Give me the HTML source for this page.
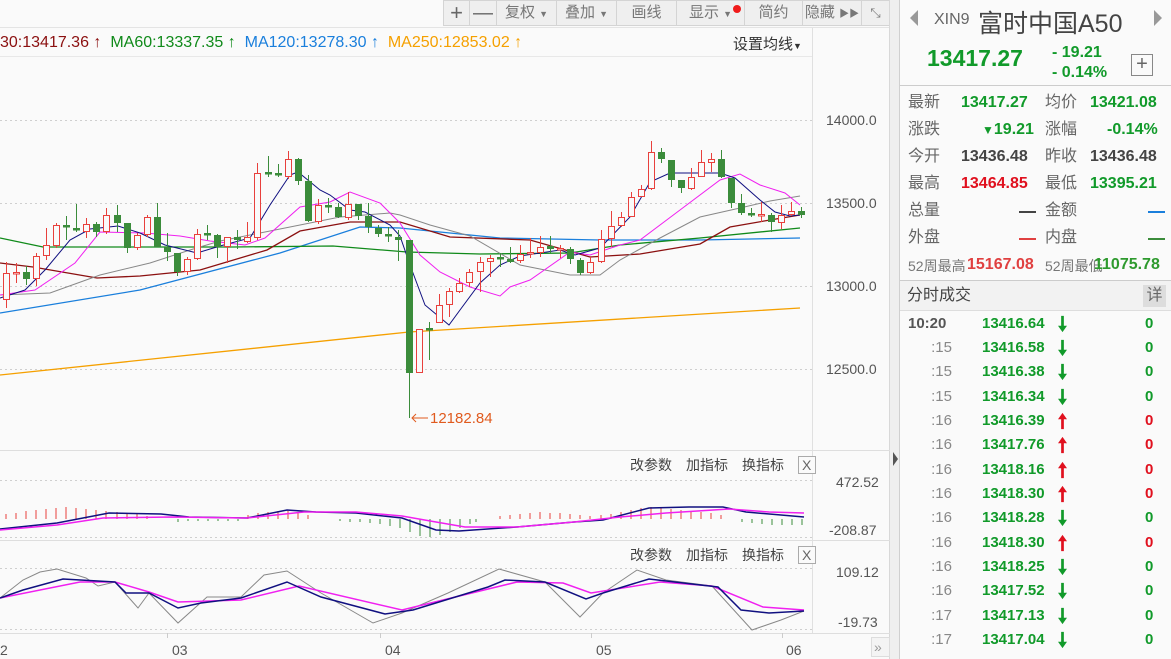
<!DOCTYPE html>
<html><head><meta charset="utf-8">
<style>
*{margin:0;padding:0;box-sizing:border-box}
body{width:1171px;height:659px;overflow:hidden;background:#fafafa;font-family:"Liberation Sans","Noto Sans CJK SC",sans-serif;position:relative}
.abs{position:absolute}
.tb{position:absolute;top:0;height:26px;background:#efefef;border:1px solid #d4d4d4;border-left:none;color:#777;font-size:15px;line-height:24px;text-align:center}
.lab{color:#666;font-size:16px}
.st{position:absolute;font-size:16px;white-space:nowrap;line-height:20px;height:20px}
.b{font-weight:bold}
.g{color:#119a2a}.r{color:#e0101e}.k{color:#444}
.row{position:absolute;left:900px;width:271px;height:24px;font-size:15px;line-height:20px}
.row .t{position:absolute;left:8px;width:44px;text-align:right;color:#888}
.row .p{position:absolute;left:82px;font-weight:bold;color:#119a2a}
.row svg{position:absolute;left:158px;top:1px}
.row .v{position:absolute;left:245px;font-weight:bold}
</style></head><body>
<svg width="0" height="0" style="position:absolute"><defs>
<symbol id="dn" viewBox="0 0 10 18"><path d="M3.5 0h3v11h3.5l-5 7-5-7h3.5z" fill="#119a2a"/></symbol>
<symbol id="up" viewBox="0 0 10 18"><path d="M3.5 18h3v-11h3.5l-5-7-5 7h3.5z" fill="#e0101e"/></symbol>
</defs></svg>
<!-- toolbar -->
<div class="tb" style="left:443px;width:27px;border-left:1px solid #d4d4d4;font-size:22px;color:#666">+</div>
<div class="tb" style="left:470px;width:27px;font-size:20px;color:#666">—</div>
<div class="tb" style="left:497px;width:60px">复权 <span style="font-size:9px">▼</span></div>
<div class="tb" style="left:557px;width:60px">叠加 <span style="font-size:9px">▼</span></div>
<div class="tb" style="left:617px;width:60px">画线</div>
<div class="tb" style="left:677px;width:68px">显示 <span style="font-size:9px">▼</span><span style="position:absolute;left:56px;top:4px;width:8px;height:8px;border-radius:4px;background:#f01c1c"></span></div>
<div class="tb" style="left:745px;width:58px">简约</div>
<div class="tb" style="left:803px;width:59px">隐藏 <span style="font-size:10px">▶▶</span></div>
<div class="tb" style="left:862px;width:28px;font-size:13px">⤡</div>
<div class="abs" style="left:0;top:27px;width:890px;height:1px;background:#e4e4e4"></div>
<div class="abs" style="left:0;top:32px;font-size:16px;white-space:nowrap;line-height:22px">
<span style="color:#8b1010">30:13417.36 ↑</span>&nbsp; <span style="color:#108a1a">MA60:13337.35 ↑</span>&nbsp; <span style="color:#1a7fdc">MA120:13278.30 ↑</span>&nbsp; <span style="color:#f5a000">MA250:12853.02 ↑</span></div>
<div class="abs" style="left:733px;top:33px;font-size:15px;color:#333">设置均线<span style="font-size:9px">▼</span></div>
<div class="abs" style="left:0;top:56px;width:812px;height:1px;background:#e8e8e8"></div>
<div class="abs" style="left:812px;top:28px;width:1px;height:605px;background:#e0e0e0"></div>
<div class="abs" style="left:889px;top:0;width:1px;height:659px;background:#d8d8d8"></div>
<div class="abs" style="left:890px;top:0;width:10px;height:659px;background:#efefef;border-right:1px solid #d0d0d0"></div>
<div class="abs" style="left:893px;top:452px;width:0;height:0;border-top:7px solid transparent;border-bottom:7px solid transparent;border-left:5px solid #555"></div>

<svg class="abs" style="left:0;top:0" width="890" height="659">
<g stroke="#cfcfcf" stroke-dasharray="2,3">
<line x1="0" y1="120.5" x2="812" y2="120.5"/><line x1="0" y1="203.5" x2="812" y2="203.5"/><line x1="0" y1="286.5" x2="812" y2="286.5"/><line x1="0" y1="369.5" x2="812" y2="369.5"/>
<line x1="0" y1="480.5" x2="812" y2="480.5"/><line x1="0" y1="537.5" x2="812" y2="537.5"/>
<line x1="0" y1="568.5" x2="812" y2="568.5"/><line x1="0" y1="629.5" x2="812" y2="629.5"/>
</g>
<g stroke="#dedede"><line x1="0" y1="450.5" x2="890" y2="450.5"/><line x1="0" y1="540.5" x2="890" y2="540.5"/><line x1="0" y1="633.5" x2="890" y2="633.5"/></g>
<g fill="#555" font-size="14" font-family="Liberation Sans,sans-serif">
<text x="826" y="125">14000.0</text><text x="826" y="208">13500.0</text><text x="826" y="291">13000.0</text><text x="826" y="374">12500.0</text>
<text x="836" y="487">472.52</text><text x="829" y="535">-208.87</text>
<text x="836" y="577">109.12</text><text x="838" y="627">-19.73</text>
<text x="0" y="655">2</text><text x="172" y="655">03</text><text x="385" y="655">04</text><text x="596" y="655">05</text><text x="786" y="655">06</text>
</g>
<g stroke="#ccc"><line x1="167.5" y1="633" x2="167.5" y2="638"/><line x1="380.5" y1="633" x2="380.5" y2="638"/><line x1="591.5" y1="633" x2="591.5" y2="638"/><line x1="782.5" y1="633" x2="782.5" y2="638"/></g>
<rect x="871.5" y="637.5" width="18" height="19" fill="#f4f4f4" stroke="#ddd"/><text x="874" y="652" fill="#999" font-size="14">»</text>
<g font-size="14" fill="#444" font-family="Liberation Sans,Noto Sans CJK SC,sans-serif">
<text x="630" y="470">改参数</text><text x="686" y="470">加指标</text><text x="742" y="470">换指标</text>
<text x="630" y="560">改参数</text><text x="686" y="560">加指标</text><text x="742" y="560">换指标</text></g>
<rect x="798.5" y="456.5" width="17" height="17" fill="#fafafa" stroke="#aaa"/><text x="802" y="470" font-size="14" fill="#666">X</text>
<rect x="798.5" y="546.5" width="17" height="17" fill="#fafafa" stroke="#aaa"/><text x="802" y="560" font-size="14" fill="#666">X</text>

<!-- MAs -->
<g fill="none" stroke-width="1.3">
<polyline stroke="#f5a000" points="0,375 409,332 800,308"/>
<polyline stroke="#1a7fdc" points="0,313 140,290 280,253 360,227 400,228 500,238 600,240 700,240 800,238"/>
<polyline stroke="#108a1a" points="0,238 43,247 233,247 333,246 407,252 480,254 570,253 620,245 700,238 800,228"/>
<polyline stroke="#8b1010" points="0,263 33,267 97,278 140,276 200,270 267,250 300,231 350,222 400,222 450,237 530,240 590,257 640,254 700,244 730,227 770,220 800,215"/>
<polyline stroke="#888" stroke-width="1" points="0,295 50,293 100,275 150,263 190,250 220,241 260,233 300,225 340,217 390,213 400,215 430,225 470,236 520,265 570,275 600,275 620,260 660,238 700,217 740,208 770,201 800,196"/>
<polyline stroke="#f020f0" stroke-width="1" points="0,295 35,290 75,263 100,232 145,233 180,236 210,241 245,245 265,238 300,207 330,202 350,192 380,203 400,223 420,255 440,272 470,287 500,296 510,287 530,280 570,252 590,255 620,245 640,240 680,210 720,180 740,174 760,185 785,193 800,205"/>
<polyline stroke="#101080" stroke-width="1" points="0,298 25,290 45,270 70,240 90,229 118,226 140,233 165,245 197,253 220,246 250,238 270,205 290,175 298,172 320,190 330,195 350,210 365,212 390,225 400,236 410,265 425,305 449,325 460,310 480,283 500,265 520,256 560,250 575,255 600,248 630,217 650,182 670,173 720,173 735,178 760,200 775,212 790,216 800,215"/>
</g>
<!-- candles -->
<g stroke="#e8403c" fill="#fafafa">
<line x1="6.5" y1="262" x2="6.5" y2="308"/><rect x="3.5" y="273.5" width="6" height="26"/>
<line x1="16.5" y1="263" x2="16.5" y2="283"/><rect x="13.5" y="272.5" width="6" height="1.5"/>
<line x1="36.5" y1="253" x2="36.5" y2="286"/><rect x="33.5" y="256.5" width="6" height="22"/>
<line x1="46.5" y1="228" x2="46.5" y2="260"/><rect x="43.5" y="245.5" width="6" height="10"/>
<line x1="56.5" y1="223" x2="56.5" y2="248"/><rect x="53.5" y="225.5" width="6" height="20"/>
<line x1="86.5" y1="218" x2="86.5" y2="238"/><rect x="83.5" y="224.5" width="6" height="7"/>
<line x1="106.5" y1="208" x2="106.5" y2="234"/><rect x="103.5" y="215.5" width="6" height="16"/>
<line x1="137.5" y1="233" x2="137.5" y2="250"/><rect x="134.5" y="235.5" width="6" height="12"/>
<line x1="147.5" y1="215" x2="147.5" y2="237"/><rect x="144.5" y="217.5" width="6" height="17"/>
<line x1="187.5" y1="257" x2="187.5" y2="275"/><rect x="184.5" y="259.5" width="6" height="12"/>
<line x1="197.5" y1="229" x2="197.5" y2="260"/><rect x="194.5" y="234.5" width="6" height="24"/>
<line x1="227.5" y1="237" x2="227.5" y2="263"/><rect x="224.5" y="237.5" width="6" height="9"/>
<line x1="247.5" y1="222" x2="247.5" y2="243"/><rect x="244.5" y="237.5" width="6" height="4"/>
<line x1="257.5" y1="163" x2="257.5" y2="240"/><rect x="254.5" y="173.5" width="6" height="64"/>
<line x1="288.5" y1="151" x2="288.5" y2="179"/><rect x="285.5" y="159.5" width="6" height="17"/>
<line x1="318.5" y1="199" x2="318.5" y2="224"/><rect x="315.5" y="205.5" width="6" height="16"/>
<line x1="348.5" y1="192" x2="348.5" y2="220"/><rect x="345.5" y="204.5" width="6" height="13"/>
<rect x="416.5" y="329.5" width="6" height="43"/>
<line x1="439.5" y1="294" x2="439.5" y2="323"/><rect x="436.5" y="305.5" width="6" height="17"/>
<line x1="449.5" y1="288" x2="449.5" y2="317"/><rect x="446.5" y="291.5" width="6" height="13"/>
<line x1="459.5" y1="278" x2="459.5" y2="293"/><rect x="456.5" y="283.5" width="6" height="8"/>
<line x1="469.5" y1="269" x2="469.5" y2="287"/><rect x="466.5" y="272.5" width="6" height="10"/>
<line x1="480.5" y1="257" x2="480.5" y2="292"/><rect x="477.5" y="262.5" width="6" height="9"/>
<line x1="490.5" y1="255" x2="490.5" y2="277"/><rect x="487.5" y="258.5" width="6" height="3"/>
<line x1="520.5" y1="245" x2="520.5" y2="263"/><rect x="517.5" y="254.5" width="6" height="6"/>
<line x1="530.5" y1="238" x2="530.5" y2="258"/><rect x="527.5" y="252.5" width="6" height="1.5"/>
<line x1="540.5" y1="236" x2="540.5" y2="257"/><rect x="537.5" y="247.5" width="6" height="5"/>
<line x1="560.5" y1="245" x2="560.5" y2="258"/><rect x="557.5" y="248.5" width="6" height="1.5"/>
<line x1="590.5" y1="257" x2="590.5" y2="274"/><rect x="587.5" y="262.5" width="6" height="10"/>
<line x1="601.5" y1="230" x2="601.5" y2="263"/><rect x="598.5" y="239.5" width="6" height="22"/>
<line x1="611.5" y1="211" x2="611.5" y2="247"/><rect x="608.5" y="226.5" width="6" height="12"/>
<line x1="621.5" y1="212" x2="621.5" y2="227"/><rect x="618.5" y="217.5" width="6" height="8"/>
<line x1="631.5" y1="192" x2="631.5" y2="217"/><rect x="628.5" y="197.5" width="6" height="19"/>
<line x1="641.5" y1="185" x2="641.5" y2="197"/><rect x="638.5" y="189.5" width="6" height="7"/>
<line x1="651.5" y1="141" x2="651.5" y2="190"/><rect x="648.5" y="152.5" width="6" height="36"/>
<line x1="691.5" y1="168" x2="691.5" y2="190"/><rect x="688.5" y="177.5" width="6" height="11"/>
<line x1="701.5" y1="150" x2="701.5" y2="177"/><rect x="698.5" y="162.5" width="6" height="14"/>
<line x1="711.5" y1="153" x2="711.5" y2="172"/><rect x="708.5" y="159.5" width="6" height="3"/>
<line x1="761.5" y1="202" x2="761.5" y2="222"/><rect x="758.5" y="214.5" width="6" height="1.5"/>
<line x1="781.5" y1="205" x2="781.5" y2="229"/><rect x="778.5" y="215.5" width="6" height="7"/>
<line x1="791.5" y1="202" x2="791.5" y2="216"/><rect x="788.5" y="211.5" width="6" height="3"/>
</g>
<g stroke="#3b8c3b" fill="#3b8c3b">
<line x1="26.5" y1="266" x2="26.5" y2="285"/><rect x="23.5" y="272.5" width="6" height="6"/>
<line x1="66.5" y1="216" x2="66.5" y2="240"/><rect x="63.5" y="225.5" width="6" height="1.5"/>
<line x1="76.5" y1="204" x2="76.5" y2="232"/><rect x="73.5" y="228.5" width="6" height="1.5"/>
<line x1="96.5" y1="222" x2="96.5" y2="237"/><rect x="93.5" y="224.5" width="6" height="7"/>
<line x1="117.5" y1="205" x2="117.5" y2="232"/><rect x="114.5" y="215.5" width="6" height="7"/>
<line x1="127.5" y1="223" x2="127.5" y2="253"/><rect x="124.5" y="223.5" width="6" height="24"/>
<line x1="157.5" y1="203" x2="157.5" y2="247"/><rect x="154.5" y="217.5" width="6" height="29"/>
<line x1="167.5" y1="233" x2="167.5" y2="261"/><rect x="164.5" y="247.5" width="6" height="4"/>
<line x1="177.5" y1="253" x2="177.5" y2="276"/><rect x="174.5" y="253.5" width="6" height="18"/>
<line x1="207.5" y1="225" x2="207.5" y2="240"/><rect x="204.5" y="233.5" width="6" height="1.5"/>
<line x1="217.5" y1="234" x2="217.5" y2="258"/><rect x="214.5" y="235.5" width="6" height="11"/>
<line x1="237.5" y1="230" x2="237.5" y2="249"/><rect x="234.5" y="237.5" width="6" height="2"/>
<line x1="268.5" y1="156" x2="268.5" y2="177"/><rect x="265.5" y="172.5" width="6" height="1.5"/>
<line x1="278.5" y1="164" x2="278.5" y2="177"/><rect x="275.5" y="173.5" width="6" height="1.5"/>
<line x1="298.5" y1="158" x2="298.5" y2="185"/><rect x="295.5" y="159.5" width="6" height="21"/>
<line x1="308.5" y1="175" x2="308.5" y2="222"/><rect x="305.5" y="181.5" width="6" height="39"/>
<line x1="328.5" y1="198" x2="328.5" y2="213"/><rect x="325.5" y="205.5" width="6" height="1.5"/>
<line x1="338.5" y1="203" x2="338.5" y2="218"/><rect x="335.5" y="207.5" width="6" height="9"/>
<line x1="358.5" y1="204" x2="358.5" y2="220"/><rect x="355.5" y="204.5" width="6" height="11"/>
<line x1="368.5" y1="203" x2="368.5" y2="233"/><rect x="365.5" y="216.5" width="6" height="10"/>
<line x1="378.5" y1="225" x2="378.5" y2="237"/><rect x="375.5" y="228.5" width="6" height="5"/>
<line x1="388.5" y1="227" x2="388.5" y2="242"/><rect x="385.5" y="234.5" width="6" height="1.5"/>
<line x1="398.5" y1="230" x2="398.5" y2="261"/><rect x="395.5" y="237.5" width="6" height="2"/>
<line x1="409.5" y1="240" x2="409.5" y2="418"/><rect x="406.5" y="240.5" width="6" height="132"/>
<line x1="429.5" y1="322" x2="429.5" y2="360"/><rect x="426.5" y="328.5" width="6" height="1.5"/>
<line x1="500.5" y1="253" x2="500.5" y2="267"/><rect x="497.5" y="257.5" width="6" height="1.5"/>
<line x1="510.5" y1="247" x2="510.5" y2="263"/><rect x="507.5" y="259.5" width="6" height="2"/>
<line x1="550.5" y1="236" x2="550.5" y2="253"/><rect x="547.5" y="246.5" width="6" height="2"/>
<line x1="570.5" y1="247" x2="570.5" y2="264"/><rect x="567.5" y="249.5" width="6" height="9"/>
<line x1="580.5" y1="258" x2="580.5" y2="275"/><rect x="577.5" y="260.5" width="6" height="12"/>
<line x1="661.5" y1="148" x2="661.5" y2="163"/><rect x="658.5" y="152.5" width="6" height="6"/>
<line x1="671.5" y1="160" x2="671.5" y2="187"/><rect x="668.5" y="160.5" width="6" height="19"/>
<line x1="681.5" y1="180" x2="681.5" y2="193"/><rect x="678.5" y="180.5" width="6" height="7"/>
<line x1="721.5" y1="150" x2="721.5" y2="178"/><rect x="718.5" y="159.5" width="6" height="17"/>
<line x1="731.5" y1="178" x2="731.5" y2="208"/><rect x="728.5" y="178.5" width="6" height="24"/>
<line x1="741.5" y1="194" x2="741.5" y2="215"/><rect x="738.5" y="203.5" width="6" height="9"/>
<line x1="751.5" y1="208" x2="751.5" y2="217"/><rect x="748.5" y="213.5" width="6" height="1.5"/>
<line x1="771.5" y1="213" x2="771.5" y2="232"/><rect x="768.5" y="215.5" width="6" height="6"/>
<line x1="801.5" y1="207" x2="801.5" y2="218"/><rect x="798.5" y="211.5" width="6" height="3"/>
</g>
<line x1="412" y1="418" x2="428" y2="418" stroke="#e05a1e"/><path d="M416 414 L412 418 L416 422" fill="none" stroke="#e05a1e"/>
<text x="430" y="423" fill="#e05a1e" font-size="15">12182.84</text>

<!-- MACD -->
<g stroke="#e8403c"><path d="M6 519V514M16 519V513M26 519V511M36 519V510M46 519V509M56 519V508M66 519V507M76 519V508M86 519V509M96 519V510M106 519V511M117 519V512M127 519V513M137 519V514M147 519V516M248 519V515M258 519V513M268 519V512M278 519V511M288 519V511M298 519V513M308 519V515M500 519V516M510 519V515M520 519V514M530 519V513M540 519V512M550 519V513M560 519V513M570 519V514M580 519V515M590 519V516M601 519V515M611 519V514M621 519V512M631 519V510M641 519V508M651 519V507M661 519V508M671 519V509M681 519V510M691 519V511M701 519V512M711 519V513M721 519V515"/></g>
<g stroke="#3b8c3b"><path d="M178 519V522M188 519V521M198 519V521M208 519V521M218 519V521M228 519V521M238 519V521M340 519V521M350 519V522M360 519V522M370 519V523M380 519V524M390 519V526M400 519V528M410 519V532M420 519V536M430 519V537M440 519V535M450 519V532M460 519V528M470 519V524M476 519V522M742 519V522M752 519V523M762 519V524M772 519V525M782 519V525M792 519V525M802 519V525"/></g>
<polyline fill="none" stroke="#101080" stroke-width="1.5" points="0,529 57,523 109,513 161,514 189,517 247,518 287,510 316,512 356,513 402,518 436,530 459,531 517,527 574,522 603,520 649,508 689,507 723,507 746,512 781,515 804,517"/>
<polyline fill="none" stroke="#f020f0" stroke-width="1.5" points="0,530 57,525 103,518 172,517 247,518 304,512 356,512 402,516 436,522 465,527 517,527 574,522 620,517 666,513 729,509 769,512 804,513"/>
<!-- KDJ -->
<polyline fill="none" stroke="#888" stroke-width="1" points="0,598 23,580 40,572 57,569 86,578 98,586 115,582 138,608 149,593 178,623 207,597 241,597 264,575 287,571 321,593 373,623 402,613 448,593 499,569 545,582 580,617 603,593 637,570 666,580 712,586 752,630 781,620 804,611"/>
<polyline fill="none" stroke="#f020f0" stroke-width="1.5" points="0,598 80,582 115,582 149,592 178,602 241,600 299,586 402,610 517,582 563,583 591,593 660,582 712,586 763,607 804,610"/>
<polyline fill="none" stroke="#101080" stroke-width="1.5" points="0,598 23,590 63,579 115,582 126,593 149,593 178,608 201,603 241,598 287,582 321,597 385,614 413,610 488,587 505,580 545,582 586,599 603,593 649,579 718,587 741,610 769,613 804,611"/>
</svg>

<!-- right panel -->
<div class="abs" style="left:900px;top:0;width:271px;height:659px;background:#fafafa"></div>
<div class="abs" style="left:910px;top:10px;width:0;height:0;border-top:8px solid transparent;border-bottom:8px solid transparent;border-right:8px solid #999"></div>
<div class="abs" style="left:1154px;top:10px;width:0;height:0;border-top:8px solid transparent;border-bottom:8px solid transparent;border-left:8px solid #999"></div>
<div class="abs" style="left:934px;top:11px;font-size:16px;color:#666">XIN9</div>
<div class="abs" style="left:978px;top:4px;font-size:25px;color:#444">富时中国A50</div>
<div class="abs b g" style="left:927px;top:45px;font-size:23px">13417.27</div>
<div class="abs b g" style="left:1052px;top:43px;font-size:16px;line-height:20px">- 19.21<br>- 0.14%</div>
<div class="abs" style="left:1131px;top:54px;width:22px;height:22px;border:1px solid #888;color:#666;font-size:20px;line-height:19px;text-align:center">+</div>
<div class="abs" style="left:900px;top:85px;width:271px;height:1px;background:#ccc"></div>
<div class="st lab" style="left:908px;top:93px">最新</div><div class="st b g" style="left:961px;top:93px">13417.27</div>
<div class="st lab" style="left:1045px;top:93px">均价</div><div class="st b g" style="left:1090px;top:93px">13421.08</div>
<div class="st lab" style="left:908px;top:120px">涨跌</div><div class="st b g" style="left:982px;top:120px"><span style="font-size:12px">▼</span>19.21</div>
<div class="st lab" style="left:1045px;top:120px">涨幅</div><div class="st b g" style="left:1107px;top:120px">-0.14%</div>
<div class="st lab" style="left:908px;top:147px">今开</div><div class="st b k" style="left:961px;top:147px">13436.48</div>
<div class="st lab" style="left:1045px;top:147px">昨收</div><div class="st b k" style="left:1090px;top:147px">13436.48</div>
<div class="st lab" style="left:908px;top:174px">最高</div><div class="st b r" style="left:961px;top:174px">13464.85</div>
<div class="st lab" style="left:1045px;top:174px">最低</div><div class="st b g" style="left:1090px;top:174px">13395.21</div>
<div class="st lab" style="left:908px;top:201px">总量</div><div class="abs" style="left:1019px;top:211px;width:17px;height:2px;background:#444"></div>
<div class="st lab" style="left:1045px;top:201px">金额</div><div class="abs" style="left:1148px;top:211px;width:17px;height:2px;background:#1a7fdc"></div>
<div class="st lab" style="left:908px;top:228px">外盘</div><div class="abs" style="left:1019px;top:238px;width:17px;height:2px;background:#e04040"></div>
<div class="st lab" style="left:1045px;top:228px">内盘</div><div class="abs" style="left:1148px;top:238px;width:17px;height:2px;background:#3b8c3b"></div>
<div class="st" style="left:908px;top:256px;font-size:14px;color:#777">52周最高</div><div class="st b" style="left:967px;top:255px;color:#e04040">15167.08</div>
<div class="st" style="left:1045px;top:256px;font-size:14px;color:#777">52周最低</div><div class="st b" style="left:1094px;top:255px;color:#2e9a2e">11075.78</div>
<div class="abs" style="left:900px;top:280px;width:271px;height:31px;background:#f2f2f2;border-top:1px solid #ccc;border-bottom:1px solid #ddd"></div>
<div class="abs" style="left:907px;top:286px;font-size:16px;color:#444;line-height:20px">分时成交</div>
<div class="abs" style="left:1143px;top:285px;width:23px;height:22px;background:#ddd;color:#666;font-size:16px;text-align:center;line-height:22px">详</div>

<div class="row" style="top:314px"><span class="t" style="color:#555;font-weight:bold;left:8px;text-align:left">10:20</span><span class="p">13416.64</span><svg width="9" height="18"><use href="#dn"/></svg><span class="v g">0</span></div>
<div class="row" style="top:338px"><span class="t">:15</span><span class="p">13416.58</span><svg width="9" height="18"><use href="#dn"/></svg><span class="v g">0</span></div>
<div class="row" style="top:362px"><span class="t">:15</span><span class="p">13416.38</span><svg width="9" height="18"><use href="#dn"/></svg><span class="v g">0</span></div>
<div class="row" style="top:387px"><span class="t">:15</span><span class="p">13416.34</span><svg width="9" height="18"><use href="#dn"/></svg><span class="v g">0</span></div>
<div class="row" style="top:411px"><span class="t">:16</span><span class="p">13416.39</span><svg width="9" height="18"><use href="#up"/></svg><span class="v r">0</span></div>
<div class="row" style="top:435px"><span class="t">:16</span><span class="p">13417.76</span><svg width="9" height="18"><use href="#up"/></svg><span class="v r">0</span></div>
<div class="row" style="top:460px"><span class="t">:16</span><span class="p">13418.16</span><svg width="9" height="18"><use href="#up"/></svg><span class="v r">0</span></div>
<div class="row" style="top:484px"><span class="t">:16</span><span class="p">13418.30</span><svg width="9" height="18"><use href="#up"/></svg><span class="v r">0</span></div>
<div class="row" style="top:508px"><span class="t">:16</span><span class="p">13418.28</span><svg width="9" height="18"><use href="#dn"/></svg><span class="v g">0</span></div>
<div class="row" style="top:533px"><span class="t">:16</span><span class="p">13418.30</span><svg width="9" height="18"><use href="#up"/></svg><span class="v r">0</span></div>
<div class="row" style="top:557px"><span class="t">:16</span><span class="p">13418.25</span><svg width="9" height="18"><use href="#dn"/></svg><span class="v g">0</span></div>
<div class="row" style="top:581px"><span class="t">:16</span><span class="p">13417.52</span><svg width="9" height="18"><use href="#dn"/></svg><span class="v g">0</span></div>
<div class="row" style="top:606px"><span class="t">:17</span><span class="p">13417.13</span><svg width="9" height="18"><use href="#dn"/></svg><span class="v g">0</span></div>
<div class="row" style="top:630px"><span class="t">:17</span><span class="p">13417.04</span><svg width="9" height="18"><use href="#dn"/></svg><span class="v g">0</span></div>
</body></html>
